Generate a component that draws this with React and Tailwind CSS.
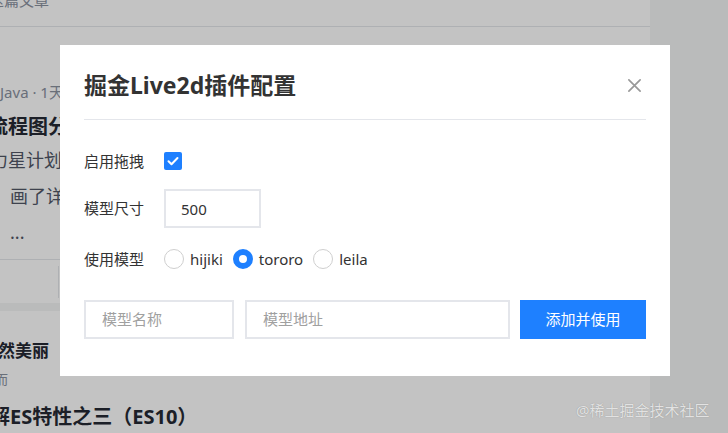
import React from 'react';

const models = ['hijiki', 'tororo', 'leila'];

function CheckIcon() {
  return (
    <svg viewBox="0 0 18 18" className="h-[18px] w-[18px]">
      <path d="M4.5 9.2l3 3 6-6.2" fill="none" stroke="white" strokeWidth="2" strokeLinecap="round" strokeLinejoin="round" />
    </svg>
  );
}

function CloseIcon() {
  return (
    <svg viewBox="0 0 16 16" className="h-[15px] w-[15px]">
      <path d="M2 2l12 12M14 2L2 14" stroke="#999" strokeWidth="1.8" strokeLinecap="round" />
    </svg>
  );
}

function Radio({ label, checked }) {
  return (
    <label className="mr-[10px] flex items-center">
      <span
        className={
          checked
            ? 'h-[20px] w-[20px] rounded-full border-[6px] border-[#1e80ff] bg-white'
            : 'h-[20px] w-[20px] rounded-full border border-[#cfcfcf] bg-white'
        }
      />
      <span className="ml-[6px] text-[15px] text-[#333]">{label}</span>
    </label>
  );
}

// the article list that sits under the overlay
function PageBehind() {
  return (
    <div className="flex h-full">
      <main className="flex w-[650px] shrink-0 flex-col bg-white">
        <div className="flex h-[27px] items-start border-b border-[#e4e6eb]">
          <p className="-ml-[11px] -mt-[7px] text-[15px] leading-[14px] text-[#8a919f]">这篇文章</p>
        </div>
        <div className="mt-[54px] text-[15px] leading-[22px] text-[#8a919f]">Java · 1天前</div>
        <h2 className="-ml-[12px] mt-[10px] text-[20px] font-bold leading-[28px] text-[#252933]">流程图分析</h2>
        <p className="-ml-[28px] mt-[1px] text-[18px] leading-[36px] text-[#515767]">动力星计划</p>
        <p className="pl-[10px] text-[18px] leading-[36px] text-[#515767]">画了详细</p>
        <p className="pl-[10px] text-[18px] leading-[36px] text-[#515767]">...</p>
        <div className="h-[10px] shrink-0 border-b border-[#e4e6eb]" />
        <div className="flex h-[43px] shrink-0 items-center">
          <div className="ml-[58px] h-[32px] w-px bg-[#e4e6eb]" />
        </div>
        <div className="h-[8px] shrink-0 bg-[#f4f5f5]" />
        <p className="-ml-[19px] mt-[27px] text-[17px] font-bold leading-[26px] text-[#252933]">自然美丽</p>
        <p className="-ml-[5px] mt-[5px] text-[13px] leading-[20px] text-[#8a919f]">而</p>
        <h2 className="-ml-[30px] mt-[14px] text-[20px] font-bold leading-[28px] text-[#252933]">理解ES特性之三（ES10）</h2>
      </main>
      <div className="flex-1 bg-[#f4f5f5]" />
    </div>
  );
}

export default function App() {
  return (
    <div className="relative h-[433px] w-[728px] overflow-hidden font-[family-name:Noto_Sans,Noto_Sans_CJK_SC,sans-serif]">
      <PageBehind />
      <div className="absolute inset-0 bg-black/[0.235]" />

      <div className="absolute left-[60px] top-[45px] w-[610px] bg-white px-6 pb-[37px]">
        <div className="flex h-[75px] items-center justify-between border-b border-[#e4e6eb] pt-[6px]">
          <h1 className="text-[23px] font-bold leading-[30px] text-[#333]">掘金Live2d插件配置</h1>
          <button className="mr-[4px] flex items-center">
            <CloseIcon />
          </button>
        </div>

        <div className="mt-[29px] flex h-[24px] items-center">
          <span className="w-[80px] text-[15px] text-[#333]">启用拖拽</span>
          <span className="flex h-[18px] w-[18px] items-center justify-center rounded-[2px] bg-[#1e80ff]">
            <CheckIcon />
          </span>
        </div>

        <div className="mt-[16px] flex items-center">
          <span className="w-[80px] text-[15px] text-[#333]">模型尺寸</span>
          <input
            defaultValue="500"
            className="h-[39px] w-[97px] border-2 border-[#e4e6eb] px-[15px] text-[15px] text-[#333] outline-none"
          />
        </div>

        <div className="mt-[19px] flex h-[24px] items-center">
          <span className="w-[80px] text-[15px] text-[#333]">使用模型</span>
          {models.map((m) => (
            <Radio key={m} label={m} checked={m === 'tororo'} />
          ))}
        </div>

        <div className="mt-[29px] flex h-[39px] items-stretch">
          <input
            placeholder="模型名称"
            className="w-[150px] border-2 border-[#e4e6eb] px-[16px] text-[15px] text-[#333] outline-none placeholder:text-[#a0a0a0]"
          />
          <input
            placeholder="模型地址"
            className="ml-[11px] min-w-0 flex-1 border-2 border-[#e4e6eb] px-[16px] text-[15px] text-[#333] outline-none placeholder:text-[#a0a0a0]"
          />
          <button className="ml-[10px] w-[126px] bg-[#1e80ff] text-[15px] text-white">添加并使用</button>
        </div>
      </div>

      <div className="absolute left-[576px] top-[399px] text-[15px] leading-[22px] text-[#e2e2e2] [text-shadow:0_0_1px_#8a8a8a]">
        @稀土掘金技术社区
      </div>
    </div>
  );
}
